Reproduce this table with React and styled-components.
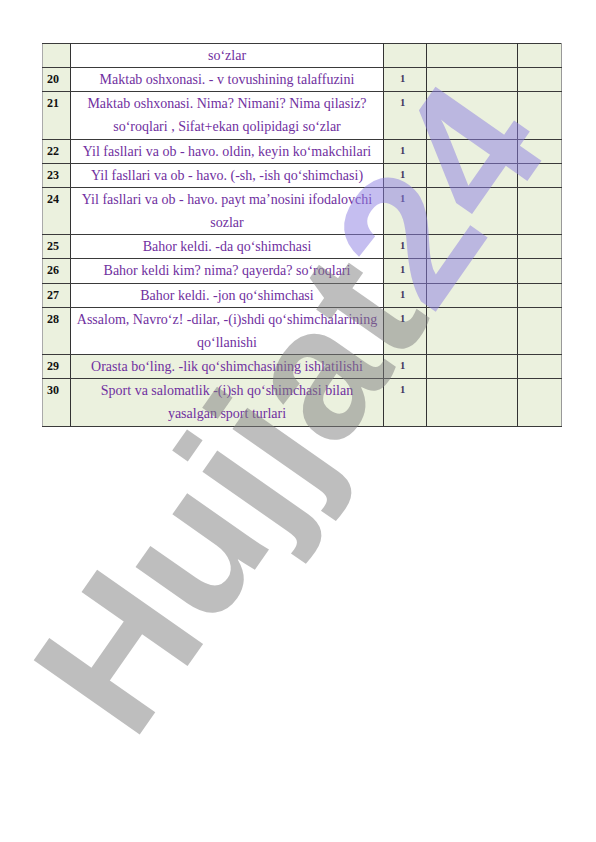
import React from "react";
import styled, { createGlobalStyle } from "styled-components";

const GlobalStyle = createGlobalStyle`
  html, body {
    margin: 0;
    padding: 0;
    background: #ffffff;
  }
`;

const rows = [
  { num: "", lines: ["so‘zlar"], mark: "" },
  { num: "20", lines: ["Maktab oshxonasi. - v tovushining talaffuzini"], mark: "1" },
  {
    num: "21",
    lines: ["Maktab oshxonasi. Nima? Nimani? Nima qilasiz?", "so‘roqlari , Sifat+ekan qolipidagi so‘zlar"],
    mark: "1",
  },
  { num: "22", lines: ["Yil fasllari va ob - havo. oldin, keyin ko‘makchilari"], mark: "1" },
  { num: "23", lines: ["Yil fasllari va ob - havo. (-sh, -ish qo‘shimchasi)"], mark: "1" },
  {
    num: "24",
    lines: ["Yil fasllari va ob - havo. payt ma’nosini ifodalovchi", "sozlar"],
    mark: "1",
  },
  { num: "25", lines: ["Bahor keldi. -da qo‘shimchasi"], mark: "1" },
  { num: "26", lines: ["Bahor keldi kim? nima? qayerda? so‘roqlari"], mark: "1" },
  { num: "27", lines: ["Bahor keldi. -jon qo‘shimchasi"], mark: "1" },
  {
    num: "28",
    lines: ["Assalom, Navro‘z! -dilar, -(i)shdi qo‘shimchalarining", "qo‘llanishi"],
    mark: "1",
  },
  { num: "29", lines: ["Orasta bo‘ling. -lik qo‘shimchasining ishlatilishi"], mark: "1", green: true },
  {
    num: "30",
    lines: ["Sport va salomatlik -(i)sh qo‘shimchasi bilan", "yasalgan sport turlari"],
    mark: "1",
    green: true,
  },
];

export default function App() {
  return (
    <Page>
      <GlobalStyle />
      <Table>
        <colgroup>
          <col style={{ width: 28 }} />
          <col style={{ width: 313 }} />
          <col style={{ width: 43 }} />
          <col style={{ width: 91 }} />
          <col style={{ width: 44 }} />
        </colgroup>
        <tbody>
          {rows.map((r, i) => (
            <tr key={i}>
              <NumCell>{r.num}</NumCell>
              <TopicCell $green={r.green}>
                {r.lines.map((l, j) => (
                  <Line key={j}>{l}</Line>
                ))}
              </TopicCell>
              <MarkCell>{r.mark}</MarkCell>
              <EmptyCell />
              <EmptyCell $edge />
            </tr>
          ))}
        </tbody>
      </Table>
      <Watermark>
        <Gray>Hujjat</Gray>
        <Lavender>24</Lavender>
      </Watermark>
    </Page>
  );
}

const Page = styled.div`
  position: relative;
  width: 596px;
  height: 842px;
  overflow: hidden;
  padding: 43px 0 0 42px;
  box-sizing: border-box;
  font-family: "Liberation Serif", "Times New Roman", serif;
`;

const Table = styled.table`
  border-collapse: collapse;
  table-layout: fixed;
  width: 520px;
  border-top: 1px solid #555;
  border-bottom: 1px solid #888;

  td {
    border-top: 1px solid #3a3a3a;
    border-bottom: 1px solid #3a3a3a;
    padding: 0;
    vertical-align: top;
  }
`;

const NumCell = styled.td`
  background: #ebf1de;
  border-left: 1px solid #aaa;
  border-right: 1px solid #333;
  font-weight: bold;
  font-size: 12px;
  color: #111;
  line-height: 20px;
  padding: 1px 0 0 4px !important;
`;

const TopicCell = styled.td`
  background: ${(p) => (p.$green ? "#ebf1de" : "#ffffff")};
  border-right: 1px solid #333;
  text-align: center;
  color: #7030a0;
  font-size: 14px;
`;

const Line = styled.div`
  line-height: 23.15px;
  white-space: nowrap;
`;

const MarkCell = styled.td`
  background: #ebf1de;
  border-right: 1px solid #333;
  text-align: center;
  font-weight: bold;
  font-size: 10.5px;
  color: #3f3560;
  line-height: 20px;
  padding: 1px 5px 0 0 !important;
`;

const EmptyCell = styled.td`
  background: #ebf1de;
  border-right: 1px solid ${(p) => (p.$edge ? "#999" : "#333")};
`;

const Watermark = styled.div`
  position: absolute;
  left: 289px;
  top: 408px;
  transform: translate(-50%, -50%) rotate(-55deg);
  font-family: "Liberation Sans", Arial, sans-serif;
  font-weight: bold;
  font-size: 188px;
  line-height: 1;
  white-space: nowrap;
  pointer-events: none;
`;

const Gray = styled.span`
  color: rgba(125, 125, 125, 0.5);
`;

const Lavender = styled.span`
  color: rgba(140, 125, 225, 0.5);
`;
